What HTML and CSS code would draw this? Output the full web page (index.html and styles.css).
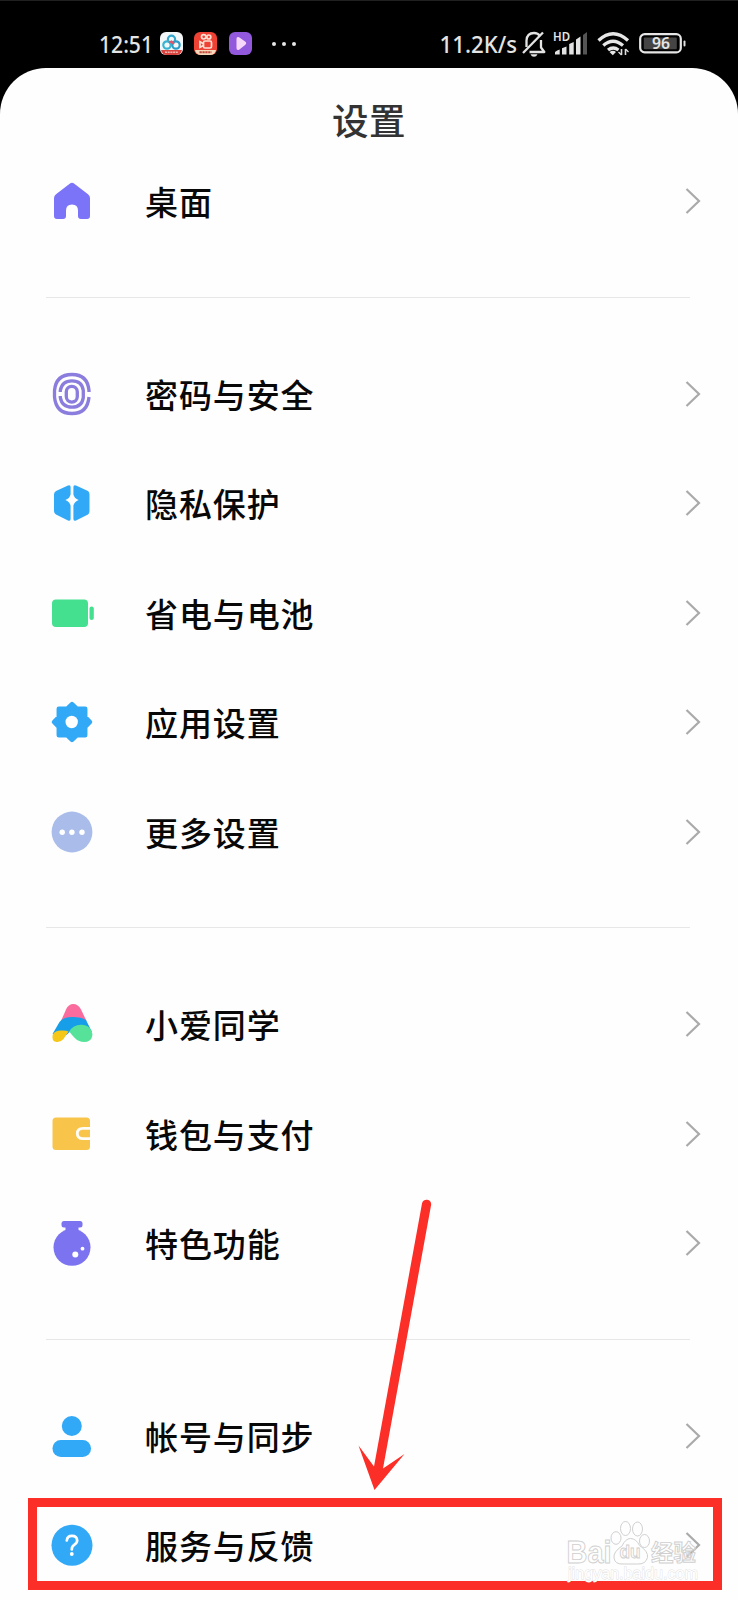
FILE: index.html
```html
<!DOCTYPE html>
<html lang="zh-CN">
<head>
<meta charset="utf-8">
<title>设置</title>
<link rel="stylesheet" href="styles.css">
</head>
<body>
<div class="phone">
  <header class="status">
    <div class="status-left">
      <svg class="clock" width="55" height="28" viewBox="0 0 55 28"><text x="0" y="22.700" textLength="54" lengthAdjust="spacingAndGlyphs">12:51</text></svg>
      <svg class="app" width="23" height="23" viewBox="0 0 23 23">
        <rect width="23" height="23" rx="6" fill="#f4f7f8"/>
        <g fill="none" stroke-width="2.200"><circle cx="11.500" cy="7.300" r="3.600" stroke="#35a6cc"/><circle cx="7" cy="13" r="3.700" stroke="#38b4d1"/><circle cx="16" cy="13" r="3.700" stroke="#2b9bc8"/><path d="M9 10.500l2.500-1 2.500 2.500" stroke="#e0566b"/></g>
        <path d="M1 18h21q-1 5-6 5H7q-5 0-6-5z" fill="#d8433f"/><path d="M5 20.300h13" stroke="#f3b4aa" stroke-width="1.500" stroke-dasharray="2 .7"/>
      </svg>
      <svg class="app" width="23" height="23" viewBox="0 0 23 23">
        <rect width="23" height="23" rx="6" fill="#ee4234"/>
        <g fill="none" stroke="#ffe1d4" stroke-width="1.700"><circle cx="9.700" cy="4.800" r="2.200"/><circle cx="14.800" cy="5" r="2"/><rect x="9.500" y="9" width="8" height="7" rx="1.500"/><path d="M9.500 11.700L6 9.800v5.500l3.500-1.800"/></g>
        <path d="M1 18h21q-1 5-6 5H7q-5 0-6-5z" fill="#f4d9bb"/><path d="M5.500 20.300h12" stroke="#c4473d" stroke-width="2" stroke-dasharray="2.300 .6"/>
      </svg>
      <svg class="app" width="23" height="23" viewBox="0 0 23 23"><rect width="23" height="23" rx="6" fill="#9259dc"/><path d="M7.500 7q0-3 2.600-1.700l6 4.300q2.200 1.700 0 3.500l-6 4.600q-2.600 1.300-2.600-1.700z" fill="#f7d8fb"/></svg>
      <svg class="dots" width="26" height="8" viewBox="0 0 26 8"><g fill="#e6e6e6"><circle cx="2" cy="4" r="2"/><circle cx="12" cy="4" r="2"/><circle cx="22" cy="4" r="2"/></g></svg>
    </div>
    <div class="status-right">
      <svg width="78" height="28" viewBox="0 0 78 28"><text x="0.500" y="22.700" textLength="77.500" lengthAdjust="spacingAndGlyphs">11.2K/s</text></svg>
      <svg class="bell" width="25" height="28" viewBox="0 0 25 28">
        <g fill="none" stroke="#e4e4e4" stroke-width="2.300" stroke-linejoin="round"><path d="M4.500 17V10.500Q5 3 12 3q4 0 6 3"/><path d="M1 23L21 2.500"/><path d="M7.500 22h14.800l-3.300-4.500V10"/></g><path d="M8.500 24.200h7q-1 2.500-3.500 2.500t-3.500-2.500z" fill="#e4e4e4"/>
      </svg>
      <svg class="signal" width="35" height="26" viewBox="0 0 35 26">
        <text class="hd" x="0" y="9.500" textLength="17" lengthAdjust="spacingAndGlyphs">HD</text>
        <g fill="#e2e2e2"><path d="M2 23.500v-2.500q2-2 4.700-2.500v5zM9 17.200l4.500-1.700v8H9zM16.200 13l4.500-2v12.500h-4.500zM23 8.500l4.500-3v18H23z"/></g><path d="M30 4l4-3v22.500h-4z" fill="#555"/>
      </svg>
      <svg class="wifi" width="33" height="26" viewBox="0 0 33 26">
        <g fill="none" stroke="#e6e6e6" stroke-width="3.300"><path d="M1.500 9.500Q16 -4 31 9.500"/><path d="M6.300 14.500q9.700-8.500 19.700 0"/><path d="M11 19q5.200-4 10.500 0"/></g><path d="M12.500 21q3.500-2.400 6.500 0l-3.200 3.200z" fill="#e6e6e6"/><path d="M24.500 24v-6M28.500 18v6" stroke="#ddd" stroke-width="1.600"/><path d="M24.500 24l-3-3M28.500 18l3 3" stroke="#ddd" stroke-width="1.300"/>
      </svg>
      <svg class="cell" width="48" height="21" viewBox="0 0 48 21">
        <rect x="1.200" y="1.200" width="40.600" height="18.200" rx="4.500" fill="none" stroke="#e6e6e6" stroke-width="2.200"/><rect x="4.800" y="4.500" width="33" height="11.700" rx="1" fill="#444"/><rect x="44.500" y="7.500" width="2" height="6" rx="1" fill="#e0e0e0"/><text class="pct" x="13" y="16" textLength="18" lengthAdjust="spacingAndGlyphs">96</text>
      </svg>
    </div>
  </header>

  <main class="sheet">
    <h1 class="title">设置</h1>
    <section class="group">
      <div class="row">
        <svg class="icon" viewBox="0 0 44 44"><path d="M20 4.500q2-1.600 4 0L38 15.300q2 1.500 2 4V37q0 3-3 3h-6q-3 0-3-3v-5.500q0-6-6-6t-6 6V37q0 3-3 3H7q-3 0-3-3V19.300q0-2.500 2-4z" fill="#7b73f8"/></svg>
        <span class="label">桌面</span><svg class="chevron" viewBox="0 0 16 28"><path d="M1.500 2L14 14 1.500 26"/></svg>
      </div>
    </section>
    <section class="group">
      <div class="row">
        <svg class="icon" viewBox="0 0 44 44"><g fill="none" stroke="#8a7ddd" stroke-width="3.300"><path d="M4.500 19.500V18.500Q6 2.500 22 2.500q15.500 0 17 16v1.500M4.500 19v6Q6 41.500 22 41.500q15.500 0 17-16.500"/><path d="M10.300 20v-1.500Q12 8.800 22 8.800t11.300 9.700v7Q32 35.200 22 35.200T10.300 25.500V24"/><rect x="16.300" y="14.300" width="11" height="15.800" rx="5.500"/></g></svg>
        <span class="label">密码与安全</span><svg class="chevron" viewBox="0 0 16 28"><path d="M1.500 2L14 14 1.500 26"/></svg>
      </div>
      <div class="row">
        <svg class="icon" viewBox="0 0 44 44"><path d="M18 4.500q2.600-1 2.600 1.500v7.500q-1 4-5.200 5.500 4.200 1.500 5.200 5.500V38q0 2.500-2.600 1.500L6 33.500q-2-1-2-3.500V13.500Q4 11 6 10zM26 4.500q-2.600-1-2.600 1.500v7.500q1 4 5.200 5.500-4.200 1.500-5.200 5.500V38q0 2.500 2.600 1.500l12-6q1.500-1 1.500-3.500V13.500q0-2.500-1.500-3.500z" fill="#32a9f6"/></svg>
        <span class="label">隐私保护</span><svg class="chevron" viewBox="0 0 16 28"><path d="M1.500 2L14 14 1.500 26"/></svg>
      </div>
      <div class="row">
        <svg class="icon" viewBox="0 0 44 44"><rect x="2" y="8.500" width="36" height="27.500" rx="4" fill="#45df90"/><rect x="39.500" y="15.500" width="4.300" height="13.500" rx="2.100" fill="#45df90"/></svg>
        <span class="label">省电与电池</span><svg class="chevron" viewBox="0 0 16 28"><path d="M1.500 2L14 14 1.500 26"/></svg>
      </div>
      <div class="row">
        <svg class="icon" viewBox="0 0 44 44"><path d="M22 4l5 4.800h8.200V17L40 22l-4.800 5v8.200H27L22 40l-5-4.800H8.800V27L4 22l4.800-5V8.800H17z" fill="#32a9f6" stroke="#32a9f6" stroke-width="4.500" stroke-linejoin="round"/><circle cx="21.700" cy="22" r="6.200" fill="#fff"/></svg>
        <span class="label">应用设置</span><svg class="chevron" viewBox="0 0 16 28"><path d="M1.500 2L14 14 1.500 26"/></svg>
      </div>
      <div class="row">
        <svg class="icon" viewBox="0 0 44 44"><circle cx="22" cy="22" r="20.400" fill="#a9bcea"/><g fill="#fff"><circle cx="12.200" cy="22.300" r="2.700"/><circle cx="21.900" cy="22.300" r="2.700"/><circle cx="32" cy="22.300" r="2.700"/></g></svg>
        <span class="label">更多设置</span><svg class="chevron" viewBox="0 0 16 28"><path d="M1.500 2L14 14 1.500 26"/></svg>
      </div>
    </section>
    <section class="group">
      <div class="row">
        <svg class="icon" viewBox="0 0 44 44"><path d="M11 19L16 7.500Q18.500 2 23.300 2t7.700 5.500L36.500 19z" fill="#f96c9d"/><path d="M2.500 32L9.500 20q3.500-5 13-5 9 0 13.500 3l6 12-12-2-10 1.500-3.500 3.500z" fill="#169fe8"/><path d="M19.300 29.500Q23 23 31 22.800q7.500-.3 10.500 6 2.500 6.500-2 9.700-4.500 3-11.500 0-3.500-2-8.700-9z" fill="#56e399"/><path d="M2.800 32.500Q5 28.700 11 28.600q5.500-.2 7.500 1L13.500 37q-3 3.500-7 3-5.500-1-3.700-7.500z" fill="#f4c719"/></svg>
        <span class="label">小爱同学</span><svg class="chevron" viewBox="0 0 16 28"><path d="M1.500 2L14 14 1.500 26"/></svg>
      </div>
      <div class="row">
        <svg class="icon" viewBox="0 0 44 44"><rect x="2.500" y="5.600" width="37.500" height="32.400" rx="3.500" fill="#f8c54a"/><path d="M40.500 16.300h-7.500q-5.700 0-5.700 5.200t5.700 5.200h7.500" fill="none" stroke="#fffdf7" stroke-width="2.800"/></svg>
        <span class="label">钱包与支付</span><svg class="chevron" viewBox="0 0 16 28"><path d="M1.500 2L14 14 1.500 26"/></svg>
      </div>
      <div class="row">
        <svg class="icon" viewBox="0 0 44 44"><rect x="11.500" y="0" width="21" height="6.500" rx="2.500" fill="#7b73f0"/><path d="M15.500 4h13v7h-13z" fill="#7b73f0"/><circle cx="22" cy="26.300" r="18.500" fill="#7b73f0"/><circle cx="25.300" cy="33.500" r="3" fill="#fff"/><circle cx="32.500" cy="27.700" r="1.900" fill="#fff"/></svg>
        <span class="label">特色功能</span><svg class="chevron" viewBox="0 0 16 28"><path d="M1.500 2L14 14 1.500 26"/></svg>
      </div>
    </section>
    <section class="group">
      <div class="row">
        <svg class="icon" viewBox="0 0 44 44"><circle cx="21.800" cy="12" r="10" fill="#32a9f6"/><rect x="2.500" y="26" width="38.500" height="17" rx="8.300" fill="#32a9f6"/></svg>
        <span class="label">帐号与同步</span><svg class="chevron" viewBox="0 0 16 28"><path d="M1.500 2L14 14 1.500 26"/></svg>
      </div>
      <div class="row">
        <svg class="icon" viewBox="0 0 44 44"><circle cx="22" cy="22.300" r="20.500" fill="#32a9f6"/><path d="M16.800 17.500q.4-4.700 5.200-4.700t5.200 4.500q0 2.600-2.700 4.300T21.800 26v.5" fill="none" stroke="#fff" stroke-width="2.700" stroke-linecap="round"/><circle cx="21.800" cy="31" r="1.900" fill="#fff"/></svg>
        <span class="label">服务与反馈</span><svg class="chevron" viewBox="0 0 16 28"><path d="M1.500 2L14 14 1.500 26"/></svg>
      </div>
    </section>
  </main>

  <div class="frame"></div>
  <svg class="arrow" width="90" height="304" viewBox="0 0 90 304"><path d="M72 13.500a4.600 4.600 0 0 1 9.100 1.500L33 278.500l21.500-14.500L24.500 300 8.500 255.500l15.500 21z" fill="#fb2f28"/></svg>
  <svg class="watermark" width="140" height="66" viewBox="0 0 140 66">
    <g fill="none" stroke="#d0d0d0" stroke-width="1"><ellipse cx="52" cy="18" rx="5" ry="6.300"/><ellipse cx="61.500" cy="8.500" rx="5" ry="7"/><ellipse cx="73.500" cy="9" rx="5" ry="7"/><ellipse cx="80.500" cy="21" rx="5" ry="6.500"/><path d="M66.500 18.500q5.500 0 9 7 9 6 8 12-2 7-10 6.500H59q-8 .5-9-6-1-6 8-12 3.500-7.500 8.500-7.500z"/></g>
    <text class="wm-big" x="2.500" y="43" textLength="45" lengthAdjust="spacingAndGlyphs">Bai</text><text class="wm-du" x="55.500" y="38" textLength="21" lengthAdjust="spacingAndGlyphs">du</text><text class="wm-cn" x="87" y="41" textLength="45">经验</text><text class="wm-url" x="4" y="58.500" textLength="130" lengthAdjust="spacingAndGlyphs">jingyan.baidu.com</text>
  </svg>
</div>
</body>
</html>
```
FILE: styles.css
```css
* { box-sizing: border-box; }
body { margin: 0; background: #000; font-family: "Noto Sans CJK SC", sans-serif; }
svg { display: block; flex: none; overflow: visible; }
.phone { position: relative; width: 738px; height: 1600px; overflow: hidden; background: #000; border-top: 1px solid #202020; }
.status { display: flex; justify-content: space-between; align-items: center; height: 66.500px; padding: 19px 51px 0 99px; }
.status-left, .status-right { display: flex; align-items: center; }
.status text { font-family: "Noto Sans", sans-serif; font-size: 24px; font-weight: 500; fill: #e4e4e4; }
.clock { margin-right: 6px; }
.app { margin-right: 11.300px; }
.dots { margin-left: 9px; }
.bell { margin-left: 5px; }
.signal { margin-left: 6px; }
.wifi { margin-left: 9px; }
.cell { margin-left: 9px; }
.status .hd { font-size: 12px; font-weight: 600; }
.status .pct { font-size: 15.500px; font-weight: 600; }
.sheet { height: 1533px; background: #fefefe; border-radius: 46px 46px 0 0; }
.title { margin: 0; height: 79px; padding-top: 26px; text-align: center; font-size: 36.500px; line-height: 51px; letter-spacing: .5px; font-weight: 500; color: #333; }
.group { padding: 0 37px 0 49.500px; }
.group + .group { position: relative; margin-top: 41px; padding-top: 42.300px; }
.group + .group::before { content: ""; position: absolute; left: 46px; right: 48px; top: 0; height: 1px; background: #e7e7e7; }
.row { display: flex; align-items: center; height: 109.450px; }
.icon { width: 44px; height: 44px; margin-right: 51.500px; }
.label { flex: 1; font-size: 33px; line-height: 48px; letter-spacing: .9px; font-weight: 500; color: #080808; }
.chevron { width: 16px; height: 28px; }
.chevron path { fill: none; stroke: #aaa; stroke-width: 2.200; }
.frame { position: absolute; left: 28px; top: 1497px; width: 694px; height: 92px; border: 9px solid #fb2f28; }
.arrow { position: absolute; left: 350px; top: 1189px; }
.watermark { position: absolute; left: 564px; top: 1519px; }
.watermark text { fill: rgba(255, 255, 255, .5); stroke: #cfcfcf; stroke-width: .9; }
.watermark .wm-big { font: 700 31px "Liberation Sans", sans-serif; }
.watermark .wm-du { font: 700 19px "Liberation Sans", sans-serif; }
.watermark .wm-cn { font: 700 22.500px "Noto Sans CJK SC", sans-serif; }
.watermark .wm-url { font: 400 16px "Liberation Sans", sans-serif; fill: #fff; stroke: #dedede; stroke-width: .8; paint-order: stroke; }
```
